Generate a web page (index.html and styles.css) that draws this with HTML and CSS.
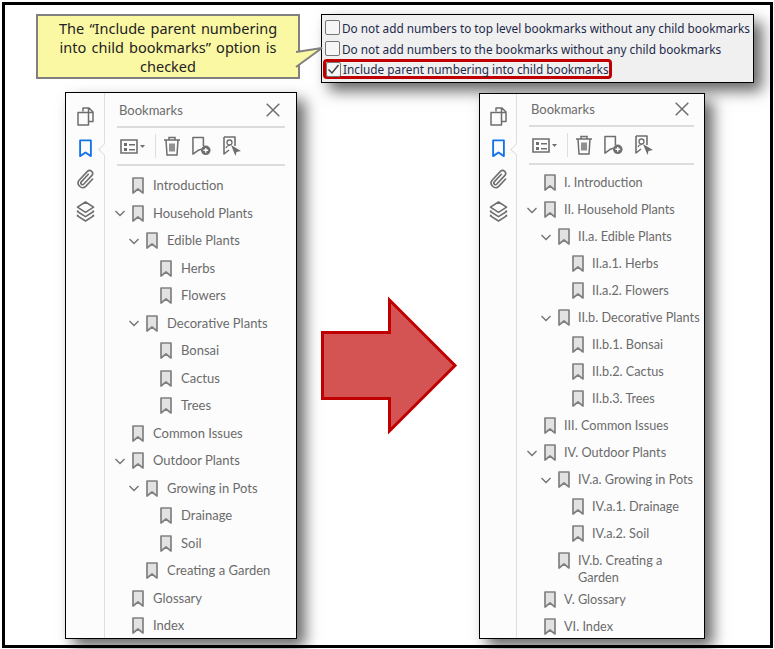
FILE: index.html

```html
<!DOCTYPE html>
<html lang="en">
<head>
  <meta charset="UTF-8" />
  <title>Bookmark numbering</title>
  <link rel="stylesheet" href="styles.css">
</head>
<body>

<svg class="defs" width="0" height="0">
  <symbol id="bm" viewBox="0 0 12 17">
    <path d="M1 1h10v15l-5-4-5 4z" fill="#e2e2e2" stroke="#808080" stroke-width="1.7" stroke-linejoin="round"/>
  </symbol>
  <symbol id="chev" viewBox="0 0 14 14">
    <path d="M2.5 5l4.5 4.5L11.500 5" fill="none" stroke="#707070" stroke-width="1.3"/>
  </symbol>
  <symbol id="pages" viewBox="0 0 17 19">
    <path d="M6 4.500V1h6l4 4v9.500h-4M11.500 1v4.500H16" fill="none" stroke="#6e6e6e" stroke-width="1.500" stroke-linejoin="round"/>
    <path d="M1 5.500h10.500V18H1z" fill="#fcfcfc" stroke="#6e6e6e" stroke-width="1.500" stroke-linejoin="round"/>
  </symbol>
  <symbol id="mark" viewBox="0 0 14 20">
    <path d="M1.200 1.200h11.600v17l-5.800-4-5.800 4z" fill="none" stroke="#1473e6" stroke-width="2" stroke-linejoin="round"/>
  </symbol>
  <symbol id="clip" viewBox="0 0 20 22">
    <path d="M13 6l-7.500 8c-1.500 1.600 1 4 2.500 2.500l8.500-9c3-3.200-1.500-7.500-4.500-4.500L3.500 12c-4 4.500 2.500 11 7 6.500L17.500 11" fill="none" stroke="#6e6e6e" stroke-width="1.7" stroke-linecap="round"/>
  </symbol>
  <symbol id="layers" viewBox="0 0 20 22">
    <path d="M10 1l8.500 5.500L10 12 1.500 6.500z" fill="none" stroke="#6e6e6e" stroke-width="1.6" stroke-linejoin="round"/>
    <path d="M2.500 10L1.500 11 10 16.500 18.500 11l-1-1M2.500 14.500l-1 1L10 21l8.500-5.500-1-1" fill="none" stroke="#6e6e6e" stroke-width="1.6" stroke-linejoin="round"/>
  </symbol>
  <symbol id="close" viewBox="0 0 14 14">
    <path d="M.7.7l12.600 12.600M13.300.7L.7 13.300" fill="none" stroke="#6e6e6e" stroke-width="1.5"/>
  </symbol>
  <symbol id="options" viewBox="0 0 25 15">
    <path d="M1 1h16v13H1z" fill="none" stroke="#6e6e6e" stroke-width="1.6"/>
    <path d="M4 4h3v3H4zM4 9h3v3H4zM9 5h6v1.500H9zM9 10h6v1.500H9z" fill="#6e6e6e"/>
    <path d="M20 6h5l-2.500 3z" fill="#6e6e6e"/>
  </symbol>
  <symbol id="trash" viewBox="0 0 18 20">
    <path d="M1 4h16M6 4V1.500h6V4M3 4l1 15h10l1-15M7 7.500v8M9 7.500v8M11 7.500v8" fill="none" stroke="#6e6e6e" stroke-width="1.500"/>
  </symbol>
  <symbol id="addmark" viewBox="0 0 20 20">
    <path d="M10 13.500L6.500 14.500 1 18.500V1h11v9" fill="none" stroke="#6e6e6e" stroke-width="1.600" stroke-linejoin="round"/>
    <circle cx="14.500" cy="14.500" r="5" fill="#6e6e6e"/>
    <path d="M12 14.500h5M14.500 12v5" stroke="#fff" stroke-width="1.400"/>
  </symbol>
  <symbol id="usermark" viewBox="0 0 18 20">
    <path d="M1 1h11v9M1 1v17l5-4" fill="none" stroke="#6e6e6e" stroke-width="1.600" stroke-linejoin="round"/>
    <circle cx="6.500" cy="6.500" r="2.500" fill="none" stroke="#6e6e6e" stroke-width="1.300"/>
    <path d="M3 12c.5-2 2-2.500 4-2.500" fill="none" stroke="#6e6e6e" stroke-width="1.200"/>
    <path d="M8 9l10 6-4.500 1-1 4z" fill="#6e6e6e"/>
  </symbol>
</svg>

<div class="frame">
  <div class="top">
    <div class="callout">
      <p>The “Include parent numbering into child bookmarks” option is<br>checked</p>
      <svg class="callout-tail" width="30" height="24" viewBox="0 0 30 24">
        <path d="M1 5L27 1 1 20" fill="#fbf8a3" stroke="#808080" stroke-width="2"/>
      </svg>
    </div>
    <div class="opts">
      <div class="opt"><span class="check"></span>Do not add numbers to top level bookmarks without any child bookmarks</div>
      <div class="opt"><span class="check"></span>Do not add numbers to the bookmarks without any child bookmarks</div>
      <div class="opt opt-on">
        <span class="check"><svg width="13" height="11" viewBox="0 0 13 11"><path d="M1.500 5.500l3.500 3.500 6.500-8" fill="none" stroke="#444" stroke-width="1.500"/></svg></span>Include parent numbering into child bookmarks
      </div>
    </div>
  </div>

  <div class="bottom">
    <section class="panel panel-a">
      <div class="rail">
        <svg class="ico-pages"><use href="#pages"/></svg>
        <div class="rail-on"><svg class="ico-mark"><use href="#mark"/></svg></div>
        <svg class="ico-clip"><use href="#clip"/></svg>
        <svg class="ico-layers"><use href="#layers"/></svg>
      </div>
      <div class="side">
        <div class="side-head">
          <span class="side-title">Bookmarks</span>
          <svg class="ico-close"><use href="#close"/></svg>
        </div>
        <div class="tools">
          <svg class="ico-options"><use href="#options"/></svg>
          <span class="tools-sep"></span>
          <svg class="ico-trash"><use href="#trash"/></svg>
          <svg class="ico-add"><use href="#addmark"/></svg>
          <svg class="ico-user"><use href="#usermark"/></svg>
        </div>
        <div class="tree">
          <div class="row"><span class="slot"></span><svg class="bm"><use href="#bm"/></svg><span>Introduction</span></div>
          <div class="row"><svg class="slot"><use href="#chev"/></svg><svg class="bm"><use href="#bm"/></svg><span>Household Plants</span></div>
          <div class="row l1"><svg class="slot"><use href="#chev"/></svg><svg class="bm"><use href="#bm"/></svg><span>Edible Plants</span></div>
          <div class="row l2"><span class="slot"></span><svg class="bm"><use href="#bm"/></svg><span>Herbs</span></div>
          <div class="row l2"><span class="slot"></span><svg class="bm"><use href="#bm"/></svg><span>Flowers</span></div>
          <div class="row l1"><svg class="slot"><use href="#chev"/></svg><svg class="bm"><use href="#bm"/></svg><span>Decorative Plants</span></div>
          <div class="row l2"><span class="slot"></span><svg class="bm"><use href="#bm"/></svg><span>Bonsai</span></div>
          <div class="row l2"><span class="slot"></span><svg class="bm"><use href="#bm"/></svg><span>Cactus</span></div>
          <div class="row l2"><span class="slot"></span><svg class="bm"><use href="#bm"/></svg><span>Trees</span></div>
          <div class="row"><span class="slot"></span><svg class="bm"><use href="#bm"/></svg><span>Common Issues</span></div>
          <div class="row"><svg class="slot"><use href="#chev"/></svg><svg class="bm"><use href="#bm"/></svg><span>Outdoor Plants</span></div>
          <div class="row l1"><svg class="slot"><use href="#chev"/></svg><svg class="bm"><use href="#bm"/></svg><span>Growing in Pots</span></div>
          <div class="row l2"><span class="slot"></span><svg class="bm"><use href="#bm"/></svg><span>Drainage</span></div>
          <div class="row l2"><span class="slot"></span><svg class="bm"><use href="#bm"/></svg><span>Soil</span></div>
          <div class="row l1"><span class="slot"></span><svg class="bm"><use href="#bm"/></svg><span>Creating a Garden</span></div>
          <div class="row"><span class="slot"></span><svg class="bm"><use href="#bm"/></svg><span>Glossary</span></div>
          <div class="row"><span class="slot"></span><svg class="bm"><use href="#bm"/></svg><span>Index</span></div>
        </div>
      </div>
    </section>

    <svg class="arrow" width="182" height="140" viewBox="0 0 182 140">
      <path d="M25.500 36.500H92.500V4L158 69.500 92.500 135V102.500H25.500z" fill="#d45353" stroke="#c00000" stroke-width="3"/>
    </svg>

    <section class="panel panel-b">
      <div class="rail">
        <svg class="ico-pages"><use href="#pages"/></svg>
        <div class="rail-on"><svg class="ico-mark"><use href="#mark"/></svg></div>
        <svg class="ico-clip"><use href="#clip"/></svg>
        <svg class="ico-layers"><use href="#layers"/></svg>
      </div>
      <div class="side">
        <div class="side-head">
          <span class="side-title">Bookmarks</span>
          <svg class="ico-close"><use href="#close"/></svg>
        </div>
        <div class="tools">
          <svg class="ico-options"><use href="#options"/></svg>
          <span class="tools-sep"></span>
          <svg class="ico-trash"><use href="#trash"/></svg>
          <svg class="ico-add"><use href="#addmark"/></svg>
          <svg class="ico-user"><use href="#usermark"/></svg>
        </div>
        <div class="tree">
          <div class="row"><span class="slot"></span><svg class="bm"><use href="#bm"/></svg><span>I. Introduction</span></div>
          <div class="row"><svg class="slot"><use href="#chev"/></svg><svg class="bm"><use href="#bm"/></svg><span>II. Household Plants</span></div>
          <div class="row l1"><svg class="slot"><use href="#chev"/></svg><svg class="bm"><use href="#bm"/></svg><span>II.a. Edible Plants</span></div>
          <div class="row l2"><span class="slot"></span><svg class="bm"><use href="#bm"/></svg><span>II.a.1. Herbs</span></div>
          <div class="row l2"><span class="slot"></span><svg class="bm"><use href="#bm"/></svg><span>II.a.2. Flowers</span></div>
          <div class="row l1"><svg class="slot"><use href="#chev"/></svg><svg class="bm"><use href="#bm"/></svg><span>II.b. Decorative Plants</span></div>
          <div class="row l2"><span class="slot"></span><svg class="bm"><use href="#bm"/></svg><span>II.b.1. Bonsai</span></div>
          <div class="row l2"><span class="slot"></span><svg class="bm"><use href="#bm"/></svg><span>II.b.2. Cactus</span></div>
          <div class="row l2"><span class="slot"></span><svg class="bm"><use href="#bm"/></svg><span>II.b.3. Trees</span></div>
          <div class="row"><span class="slot"></span><svg class="bm"><use href="#bm"/></svg><span>III. Common Issues</span></div>
          <div class="row"><svg class="slot"><use href="#chev"/></svg><svg class="bm"><use href="#bm"/></svg><span>IV. Outdoor Plants</span></div>
          <div class="row l1"><svg class="slot"><use href="#chev"/></svg><svg class="bm"><use href="#bm"/></svg><span>IV.a. Growing in Pots</span></div>
          <div class="row l2"><span class="slot"></span><svg class="bm"><use href="#bm"/></svg><span>IV.a.1. Drainage</span></div>
          <div class="row l2"><span class="slot"></span><svg class="bm"><use href="#bm"/></svg><span>IV.a.2. Soil</span></div>
          <div class="row l1 row-wrap"><span class="slot"></span><svg class="bm"><use href="#bm"/></svg><span>IV.b. Creating a<br>Garden</span></div>
          <div class="row"><span class="slot"></span><svg class="bm"><use href="#bm"/></svg><span>V. Glossary</span></div>
          <div class="row"><span class="slot"></span><svg class="bm"><use href="#bm"/></svg><span>VI. Index</span></div>
        </div>
      </div>
    </section>
  </div>
</div>

</body>
</html>
```

FILE: styles.css

```css
:root {
  --ink: #6b6b6b;
  --rule: #dcdcdc;
  --red: #c00000;
  --panel-bg: #fcfcfc;
  --shadow: 8px 8px 14px rgba(0, 0, 0, 0.6);
}

*, *::before, *::after { box-sizing: border-box; }

html, body { height: 100%; }

body {
  margin: 0;
  background: #fff;
  font-family: "Lato", "Open Sans", sans-serif;
  overflow: hidden;
}

.defs { position: absolute; }

.frame {
  width: 771px;
  height: 646px;
  margin: 2px 0 0 2px;
  border: 3px solid #000;
  padding: 9px 0 0 31px;
  background: #fff;
}

/* top strip */
.top {
  display: flex;
  align-items: flex-start;
  gap: 21px;
}

.callout {
  position: relative;
  z-index: 2;
  width: 264px;
  height: 65px;
  padding: 3px 16px 0;
  background: #fbf8a3;
  border: 2px solid #808080;
  color: #222;
  font: 14.500px/19px "Noto Sans", sans-serif;
}

.callout p {
  margin: 0;
  text-align: center;
  word-spacing: 1.500px;
}

.callout-tail {
  position: absolute;
  top: 31px;
  right: -27px;
}

.opts {
  width: 433px;
  height: 69px;
  padding: 2px 0 0 3px;
  background: #f0f0f0;
  border: 1px solid #000;
  box-shadow: var(--shadow);
  color: #1c2a4a;
  font: 11.800px/16px "Noto Sans", sans-serif;
}

.opt {
  display: flex;
  align-items: center;
  gap: 2px;
  height: 21px;
  white-space: nowrap;
}

.opt-on {
  width: 289px;
  height: 20px;
  margin: 0 0 0 -2px;
  padding-left: 2px;
  border: 3px solid var(--red);
  border-radius: 4px;
}

.check {
  display: flex;
  align-items: center;
  justify-content: center;
  flex: none;
  width: 15px;
  height: 15px;
  border: 1.500px solid #777;
  border-radius: 2px;
  background: #f6f6f6;
}

.opt-on .check { margin-left: -2px; }

/* bookmark panels */
.bottom {
  display: flex;
  align-items: flex-start;
  margin: 9px 0 0 29px;
}

.panel {
  display: flex;
  height: 547px;
  background: var(--panel-bg);
  border: 1px solid #000;
  box-shadow: var(--shadow);
  overflow: hidden;
}

.panel-a { width: 232px; }

.panel-b {
  width: 226px;
  height: 546px;
  margin-top: 1px;
}

.arrow {
  flex: none;
  align-self: center;
}

.rail {
  display: flex;
  flex-direction: column;
  align-items: center;
  flex: none;
  width: 39px;
  padding-top: 14px;
  border-right: 1px solid #dedede;
}

.panel-b .rail { width: 37px; padding-top: 13px; }

.ico-pages { width: 17px; height: 19px; margin-bottom: 13px; }
.ico-mark { display: block; width: 13px; height: 19px; }
.ico-clip { width: 19px; height: 22px; margin: 10px 0 11px; }
.ico-layers { width: 19px; height: 21px; }

.rail-on { position: relative; width: 100%; display: flex; justify-content: center; }

.rail-on::after {
  content: "";
  position: absolute;
  top: 6px;
  right: -5px;
  width: 9px;
  height: 9px;
  background: var(--panel-bg);
  border-left: 1px solid #dedede;
  border-bottom: 1px solid #dedede;
  transform: rotate(45deg);
}

.side {
  flex: 1;
  min-width: 0;
  padding: 0 11px 0 12px;
}

.panel-b .side { padding-right: 10px; }

.side-head {
  display: flex;
  justify-content: space-between;
  align-items: center;
  height: 35px;
  padding: 0 5px 0 2px;
  border-bottom: 2px solid var(--rule);
}

.panel-b .side-head { height: 33px; padding-bottom: 2px; }

.side-title {
  color: var(--ink);
  font-size: 13px;
}

.ico-close { width: 14px; height: 14px; }

.tools {
  display: flex;
  align-items: center;
  height: 38px;
  padding-left: 3px;
  border-bottom: 2px solid var(--rule);
}

.ico-options { width: 25px; height: 15px; }
.tools-sep { width: 1px; height: 24px; margin: 0 7px 0 10px; background: #dedede; }
.ico-trash { width: 18px; height: 20px; margin-right: 11px; }
.ico-add { width: 19px; height: 20px; margin-right: 12px; }
.ico-user { width: 18px; height: 20px; }

.tree {
  margin-left: -4px;
  padding-top: 5.750px;
  color: var(--ink);
  font-size: 13px;
  line-height: 17px;
}

.panel-b .tree {
  padding-top: 4px;
  font-size: 12.700px;
}

.row {
  display: flex;
  align-items: center;
  height: 27.500px;
  white-space: nowrap;
}

.panel-b .row { height: 27px; }
.panel-b .row-wrap { height: 39px; align-items: flex-start; padding-top: 5px; }

.l1 { padding-left: 14px; }
.l2 { padding-left: 28px; }

.slot { flex: none; width: 14px; height: 14px; }

.bm {
  flex: none;
  width: 12px;
  height: 17px;
  margin: 0 9px 0 5px;
}

.panel-b .bm { margin-right: 8px; }
```
